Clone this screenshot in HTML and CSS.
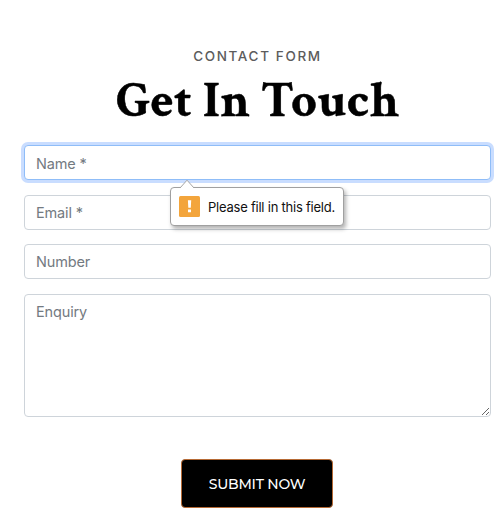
FILE: index.html
```
<!DOCTYPE html>
<html lang="en">
<head>
<meta charset="utf-8">
<title>Contact Form</title>
<link rel="stylesheet" href="styles.css">
</head>
<body>
<main class="contact">
  <p class="eyebrow">CONTACT FORM</p>
  <h1 class="title">Get In Touch</h1>
  <form class="form">
    <div class="field">
      <input class="control focused" type="text" placeholder="Name *">
      <div class="tip" role="alert">
        <svg class="tip-arrow" width="16" height="9" viewBox="0 0 16 9"><path d="M1 9L8 1.2L15 9" fill="#fff" stroke="#a5a5a5"/></svg>
        <svg class="tip-icon" width="21" height="21" viewBox="0 0 21 21"><rect width="21" height="21" rx="1.5" fill="#f3a53c"/><path d="M8.9 4.3h3.3l-.4 7.5H9.3zM9 13.5h3v2.8H9z" fill="#fff"/></svg>
        <span>Please fill in this field.</span>
      </div>
    </div>
    <input class="control" type="text" placeholder="Email *">
    <input class="control" type="text" placeholder="Number">
    <textarea class="control area" placeholder="Enquiry"></textarea>
    <button class="submit" type="button"><span>SUBMIT NOW</span></button>
  </form>
</main>
</body>
</html>
```
FILE: styles.css
```
* { box-sizing: border-box; }
body {
  margin: 0;
  background: #fff;
  font-family: Inter, "Liberation Sans", sans-serif;
  overflow: hidden;
}
.contact { padding: 46px 9px 0 24px; }
.eyebrow {
  margin: 0;
  font-size: 13.5px;
  font-weight: 500;
  line-height: 20px;
  letter-spacing: 1.65px;
  text-align: center;
  color: #5c5c5c;
}
.title {
  margin: 8px 0 0;
  font: bold 50px/56px "Crimson Text", "Liberation Serif", serif;
  letter-spacing: 0.5px;
  -webkit-text-stroke: 0.5px #000;
  text-align: center;
  white-space: nowrap;
  color: #000;
}
.form {
  display: flex;
  flex-direction: column;
  gap: 14.5px;
  margin-top: 15.4px;
}
.field { position: relative; height: 35px; }
.control {
  display: block;
  width: 100%;
  height: 35px;
  margin: 0;
  padding: 0 11px;
  border: 1px solid #ced4da;
  border-radius: 4px;
  outline: 0;
  background: #fff;
  font: 14.5px/22px Inter, "Liberation Sans", sans-serif;
  letter-spacing: -0.15px;
}
.control::placeholder { color: #737a81; opacity: 1; }
.focused {
  border-color: #8fbdf8;
  box-shadow: 0 0 0 3px #c9ddff;
  padding-top: 1px;
}
.area { height: 123px; padding-top: 6px; resize: vertical; }
.tip {
  position: absolute;
  z-index: 1;
  left: 146px;
  top: 42px;
  display: flex;
  align-items: center;
  gap: 8px;
  width: 174px;
  height: 39px;
  padding-left: 8px;
  border: 1px solid #a0a0a0;
  border-radius: 4px;
  background: #fff;
  box-shadow: 2px 3px 4px rgba(0, 0, 0, .3);
  font-size: 13px;
  letter-spacing: -0.23px;
  white-space: nowrap;
  color: #111;
}
.tip-arrow { position: absolute; left: 8px; top: -9px; }
.submit {
  align-self: center;
  width: 152px;
  height: 49px;
  margin: 28px 1px 0 0;
  padding: 0;
  border: 1px solid #b66a35;
  border-radius: 4px;
  background: #000;
  color: #fff;
  font: 500 14px/20px Montserrat, Inter, sans-serif;
  letter-spacing: -0.2px;
}
```
